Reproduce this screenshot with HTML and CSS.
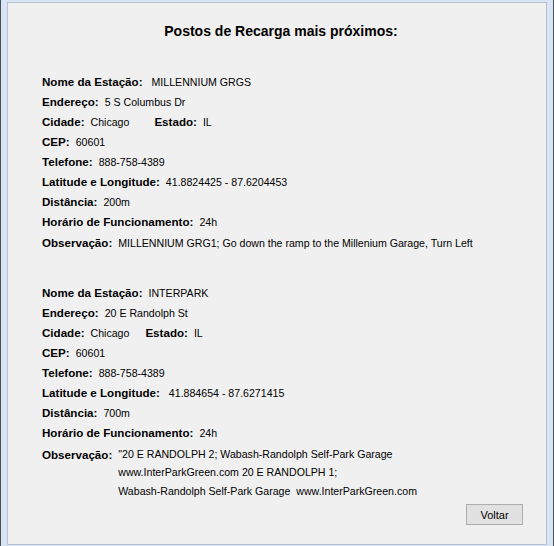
FILE: index.html
```html
<!DOCTYPE html>
<html lang="pt">
<head>
<meta charset="utf-8">
<title>Postos de Recarga</title>
<link rel="stylesheet" href="styles.css">
</head>
<body>
<div class="window">
  <div class="panel">
    <h1 class="title">Postos de Recarga mais próximos:</h1>

    <section class="station first">
      <div class="row"><b>Nome da Estação:</b><span class="v gap-name1">MILLENNIUM GRGS</span></div>
      <div class="row"><b>Endereço:</b><span class="v">5 S Columbus Dr</span></div>
      <div class="row"><b>Cidade:</b><span class="v city1">Chicago</span><b>Estado:</b><span class="v">IL</span></div>
      <div class="row"><b>CEP:</b><span class="v">60601</span></div>
      <div class="row"><b>Telefone:</b><span class="v">888-758-4389</span></div>
      <div class="row"><b>Latitude e Longitude:</b><span class="v">41.8824425 - 87.6204453</span></div>
      <div class="row"><b>Distância:</b><span class="v">200m</span></div>
      <div class="row"><b>Horário de Funcionamento:</b><span class="v">24h</span></div>
      <div class="row obs1"><b>Observação:</b><span class="v">MILLENNIUM GRG1; Go down the ramp to the Millenium Garage, Turn Left</span></div>
    </section>

    <section class="station second">
      <div class="row"><b>Nome da Estação:</b><span class="v">INTERPARK</span></div>
      <div class="row"><b>Endereço:</b><span class="v">20 E Randolph St</span></div>
      <div class="row"><b>Cidade:</b><span class="v city2">Chicago</span><b>Estado:</b><span class="v">IL</span></div>
      <div class="row"><b>CEP:</b><span class="v">60601</span></div>
      <div class="row"><b>Telefone:</b><span class="v">888-758-4389</span></div>
      <div class="row"><b>Latitude e Longitude:</b><span class="v gap-lat2">41.884654 - 87.6271415</span></div>
      <div class="row"><b>Distância:</b><span class="v">700m</span></div>
      <div class="row"><b>Horário de Funcionamento:</b><span class="v">24h</span></div>
      <div class="row obs2">
        <b>Observação:</b>
        <div class="v multi">
          <div class="l1">"20 E RANDOLPH 2; Wabash-Randolph Self-Park Garage</div>
          <div class="l2">www.InterParkGreen.com 20 E RANDOLPH 1;</div>
          <div class="l3">Wabash-Randolph Self-Park Garage&nbsp; www.InterParkGreen.com</div>
        </div>
      </div>
    </section>

    <div class="actions"><button class="btn" type="button">Voltar</button></div>
  </div>
</div>
</body>
</html>
```

FILE: styles.css
```css
html, body {
  margin: 0;
  padding: 0;
}
body {
  width: 554px;
  height: 546px;
  overflow: hidden;
  font-family: "Liberation Sans", Arial, sans-serif;
  font-size: 10.6px;
  color: #000;
}
.window {
  width: 554px;
  height: 546px;
  box-sizing: border-box;
  background: #d9e5f4;
  border-left: 1px solid #4b4f55;
  border-right: 1px solid #4b4f55;
  padding: 2px 6px 1px 6px;
}
.panel {
  height: 100%;
  box-sizing: border-box;
  background: #f0f0f0;
  border: 1px solid #b4c2d3;
  padding: 19px 0 0 34px;
  display: flex;
  flex-direction: column;
}
.title {
  margin: 0 0 32px 0;
  font-size: 14px;
  line-height: 18px;
  font-weight: bold;
  text-align: center;
  padding-right: 34px;
  padding-left: 8px;
}
.station {
  display: flex;
  flex-direction: column;
}
.station.second {
  margin-top: 30px;
}
.row {
  display: flex;
  align-items: baseline;
  height: 20px;
  line-height: 20px;
  white-space: nowrap;
}
.row b {
  font-weight: bold;
  font-size: 11.6px;
}
.v {
  margin-left: 6px;
}
.gap-name1 {
  margin-left: 9px;
}
.gap-lat2 {
  margin-left: 9px;
}
.city1 {
  margin-right: 25px;
}
.city2 {
  margin-right: 16px;
}
.obs1 {
  margin-top: 1px;
}
.obs2 {
  margin-top: 3px;
  height: auto;
  align-items: flex-start;
}
.multi .l1 {
  line-height: 17px;
}
.multi .l2 {
  line-height: 17px;
  margin-top: 1px;
}
.multi .l3 {
  line-height: 20px;
}
.obs2 b {
  line-height: 17px;
}
.actions {
  display: flex;
  justify-content: flex-end;
  padding-right: 23px;
  margin-top: 3px;
}
.btn {
  width: 57px;
  height: 21px;
  padding: 0;
  font-family: "Liberation Sans", Arial, sans-serif;
  font-size: 11px;
  color: #000;
  background: #e1e1e1;
  border: 1px solid #adadad;
  border-radius: 0;
}
```
